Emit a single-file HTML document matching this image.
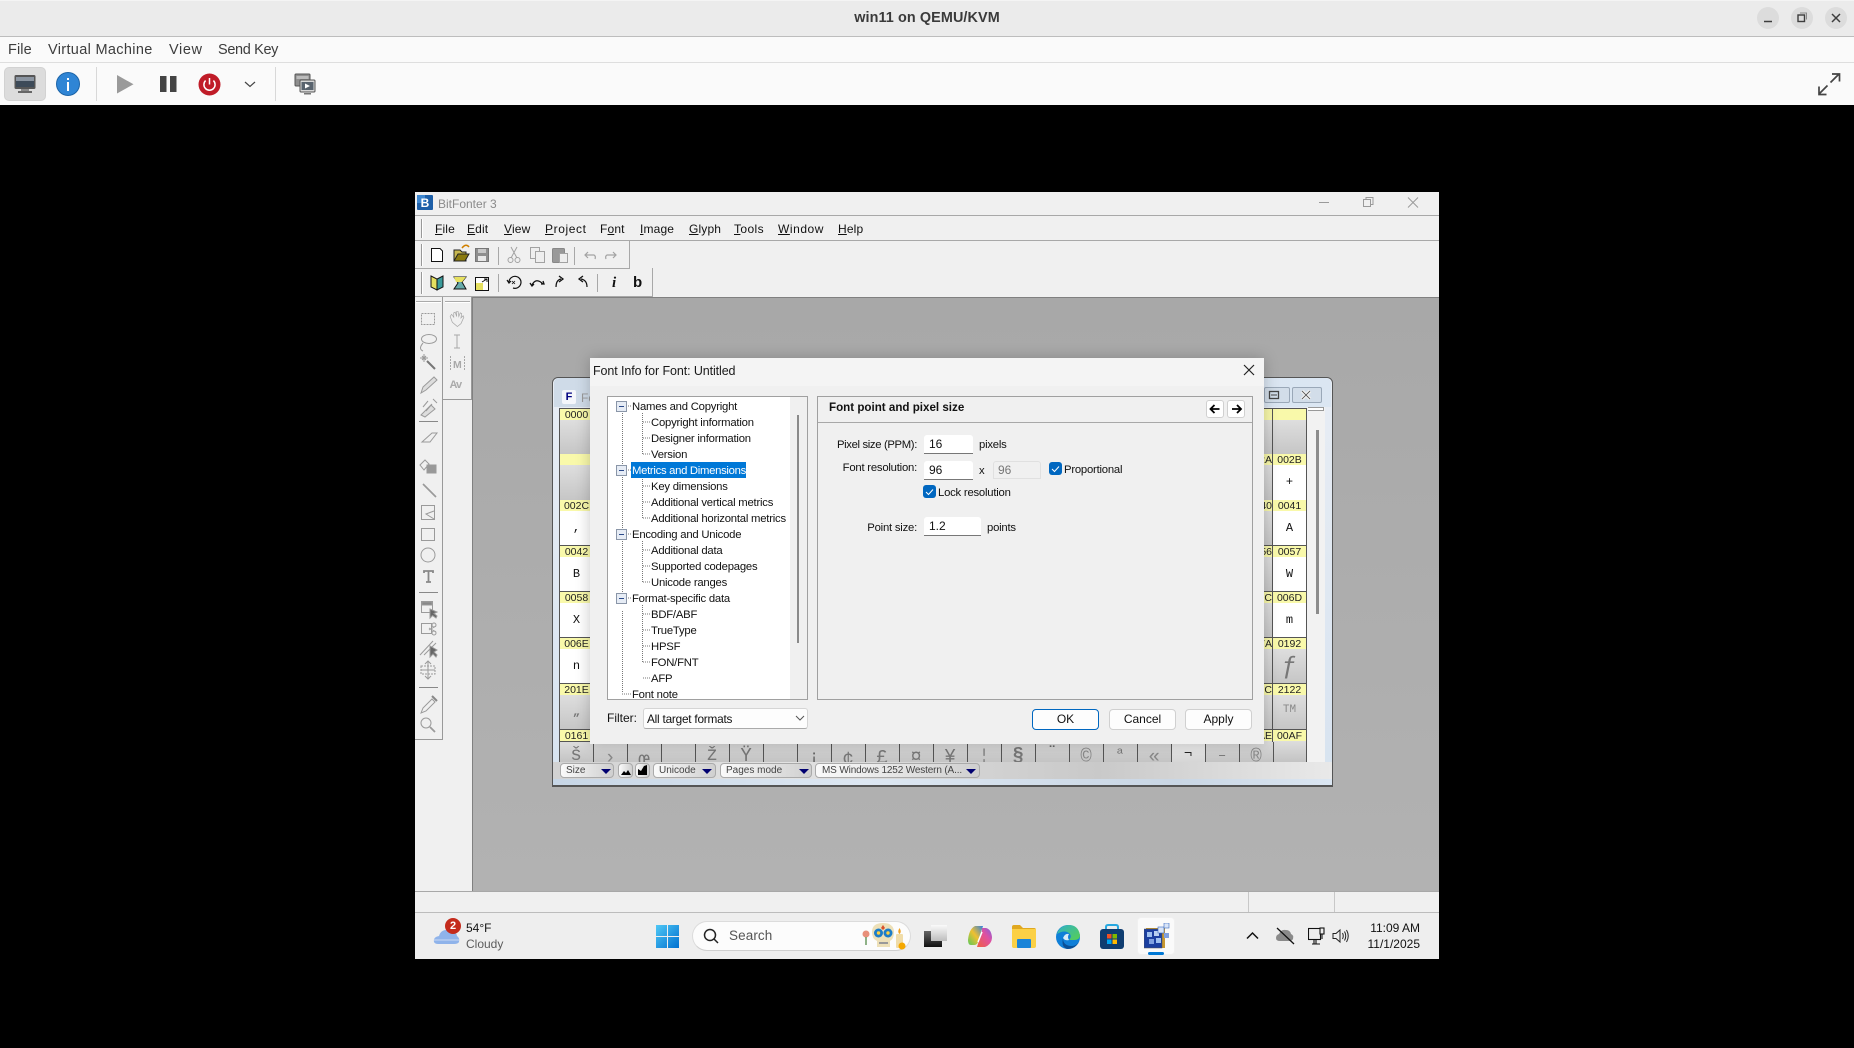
<!DOCTYPE html>
<html><head><meta charset="utf-8"><title>win11 on QEMU/KVM</title>
<style>
html,body{margin:0;padding:0;width:1854px;height:1048px;overflow:hidden;background:#000;font-family:"Liberation Sans","DejaVu Sans",sans-serif;}
div,span,svg{position:absolute;box-sizing:border-box}
.t{white-space:nowrap;font-size:11.3px;line-height:16px;color:#111;letter-spacing:-.22px}
.t span{position:static}
.m{font-size:12px;letter-spacing:.15px}
.n{font-size:12px;letter-spacing:0}
.u{text-decoration:underline}
.tm{font-size:14.5px;line-height:18px;color:#3d3d3d;white-space:nowrap;letter-spacing:.1px}
.r{text-align:right}
.h{width:35px;height:13px;background:#f9f9aa;border:1px solid #555;font-size:10.5px;line-height:12px;text-align:center;color:#222;letter-spacing:0}
.c{width:35px;height:34px;border-right:1px solid #555;border-left:1px solid #555;background:linear-gradient(#dedede,#c6c6c6);text-align:center;font-family:"Liberation Mono",monospace;color:#777;font-size:12px;line-height:34px}
.w{background:#fff;color:#111}
.inp{background:#fff;border-bottom:1px solid #777;border-radius:3px 3px 0 0;font-size:12px;line-height:19px;padding-left:5px;color:#111}
.cb{width:13px;height:13px;border-radius:3px;background:#0067c0}
.btn{background:#fdfdfd;border:1px solid #d0d0d0;border-radius:4px;font-size:12px;line-height:19px;text-align:center;color:#111;width:67px;height:21px}
.sb{background:linear-gradient(90deg,#fafafa,#cfcfcf);border:1px solid #aaa;border-radius:4px;height:15px;font-size:10px;line-height:13px;color:#444;padding-left:5px;white-space:nowrap}
.ar{width:0;height:0;border-left:5px solid transparent;border-right:5px solid transparent;border-top:5px solid #000070;top:5px}
.g{stroke:#a2a2a2;fill:none;stroke-width:1}
</style></head><body>

<!-- GNOME title bar -->
<div style="left:0;top:0;width:1854px;height:37px;background:#ebebeb;border-top:1px solid #f4f4f4;border-bottom:1px solid #bdbdbd"></div>
<div class="tm" style="left:0;top:9px;width:1854px;text-align:center;font-weight:bold;font-size:14.4px;color:#3a3a3a">win11 on QEMU/KVM</div>
<div style="left:1757px;top:7px;width:22px;height:22px;border-radius:50%;background:#dcdcdc"></div>
<div style="left:1791px;top:7px;width:22px;height:22px;border-radius:50%;background:#dcdcdc"></div>
<div style="left:1825px;top:7px;width:22px;height:22px;border-radius:50%;background:#dcdcdc"></div>
<svg style="left:1757px;top:7px" width="90" height="22" fill="none" stroke="#3d3d3d" stroke-width="1.3">
<path d="M7 14.5H15" stroke-width="1.5"/>
<rect x="41" y="8" width="6.5" height="6.5" stroke-width="1.4"/><path d="M43 6H49.5V12.5" stroke="#8a8a8a" stroke-width="1"/>
<path d="M75 7L83 15M83 7L75 15" stroke-width="1.5"/></svg>

<!-- VM menu -->
<div style="left:0;top:37px;width:1854px;height:26px;background:#fafafa;border-bottom:1px solid #dedede"></div>
<div class="tm" style="left:8px;top:41px">File</div>
<div class="tm" style="left:48px;top:41px;letter-spacing:.33px">Virtual Machine</div>
<div class="tm" style="left:169px;top:41px;letter-spacing:.6px">View</div>
<div class="tm" style="left:218px;top:41px;letter-spacing:-.35px">Send Key</div>

<!-- VM toolbar -->
<div style="left:0;top:63px;width:1854px;height:42px;background:#fafafa"></div>
<div style="left:4px;top:67px;width:42px;height:34px;background:#dcdcdc;border-radius:5px;border:1px solid #d2d2d2"></div>
<svg style="left:14px;top:74px" width="22" height="20"><rect x="0.5" y="1" width="21" height="14" rx="1.5" fill="#555"/><rect x="2" y="3" width="18" height="10" fill="#3d4a58"/><rect x="2" y="3" width="18" height="4" fill="#8a94a0"/><rect x="7" y="15" width="8" height="2" fill="#888"/><rect x="4" y="17" width="14" height="2" fill="#666"/></svg>
<svg style="left:56px;top:72px" width="24" height="24"><circle cx="12" cy="12" r="11.5" fill="#2f85d5"/><circle cx="12" cy="12" r="11.5" fill="none" stroke="#1c64a8"/><rect x="11" y="10" width="2" height="9" fill="#fff"/><rect x="11" y="6" width="2" height="2" fill="#fff"/></svg>
<div style="left:96px;top:67px;width:1px;height:34px;background:#d8d8d8"></div>
<svg style="left:117px;top:75px" width="18" height="19"><path d="M0 0L16.5 9.3L0 18.5Z" fill="#9a9a9a"/></svg>
<svg style="left:160px;top:76px" width="17" height="16"><rect width="6.5" height="16" fill="#444"/><rect x="10" width="6.5" height="16" fill="#444"/></svg>
<svg style="left:198px;top:73px" width="23" height="23"><circle cx="11.5" cy="11.5" r="11" fill="#c01c28"/><path d="M7.6 7.6A5.6 5.6 0 1 0 15.4 7.6" fill="none" stroke="#fff" stroke-width="1.5"/><path d="M11.5 5V11.5" stroke="#fff" stroke-width="1.5"/></svg>
<svg style="left:244px;top:81px" width="12" height="7"><path d="M1 1L6 5.5L11 1" fill="none" stroke="#444" stroke-width="1.2"/></svg>
<div style="left:275px;top:67px;width:1px;height:34px;background:#d8d8d8"></div>
<svg style="left:294px;top:73px" width="22" height="22"><rect x="1" y="1" width="15" height="12" rx="1" fill="#8e8e8e" stroke="#555"/><rect x="2.5" y="3" width="12" height="3" fill="#bbb"/><rect x="6" y="7" width="15" height="12" rx="1" fill="#d8d8d8" stroke="#555"/><rect x="7.5" y="9" width="12" height="8" fill="#59636e"/><path d="M11 10.5L16 13L11 15.5Z" fill="#fff"/><rect x="10" y="20" width="7" height="1.5" fill="#777"/></svg>
<svg style="left:1817px;top:72px" width="24" height="24" fill="none" stroke="#444" stroke-width="1.7"><path d="M13.5 10.5L22 2M15 2H22.5V9.5M10.5 13.5L2 22M2 14.5V22.5H9.5"/></svg>

<!-- Windows guest -->
<div style="left:415px;top:192px;width:1024px;height:767px;background:#f0f0f0"></div>
<svg style="left:417px;top:195px" width="16" height="15"><rect width="16" height="15" rx="1" fill="#1d5fa8"/><rect x="0" y="0" width="8" height="8" fill="#3d86cf"/><text x="8" y="12" font-family="Liberation Sans" font-weight="bold" font-size="12" fill="#fff" text-anchor="middle">B</text></svg>
<div class="t n" style="left:438px;top:196px;color:#8a8a8a">BitFonter 3</div>
<svg style="left:1315px;top:196px" width="110" height="14" fill="none" stroke="#9a9a9a"><path d="M4 6.5H14"/><rect x="48.5" y="3.5" width="7" height="7"/><path d="M51 3.5V1.5H58V8.5H55.5"/><path d="M93 1.5L103 11.500M103 1.500L93 11.500"/></svg>

<div style="left:415px;top:215px;width:1024px;height:1px;background:#a8a8a8"></div>
<div style="left:415px;top:240px;width:1024px;height:1px;background:#a8a8a8"></div>
<div style="left:421px;top:219px;width:2px;height:19px;border-left:1px solid #999;border-right:1px solid #fff"></div>
<div class="t m" style="left:435px;top:221px"><span class="u">F</span>ile</div>
<div class="t m" style="left:467px;top:221px"><span class="u">E</span>dit</div>
<div class="t m" style="left:504px;top:221px"><span class="u">V</span>iew</div>
<div class="t m" style="left:545px;top:221px;letter-spacing:.6px"><span class="u">P</span>roject</div>
<div class="t m" style="left:600px;top:221px">F<span class="u">o</span>nt</div>
<div class="t m" style="left:640px;top:221px"><span class="u">I</span>mage</div>
<div class="t m" style="left:689px;top:221px"><span class="u">G</span>lyph</div>
<div class="t m" style="left:734px;top:221px;letter-spacing:.4px"><span class="u">T</span>ools</div>
<div class="t m" style="left:778px;top:221px;letter-spacing:.55px"><span class="u">W</span>indow</div>
<div class="t m" style="left:838px;top:221px"><span class="u">H</span>elp</div>

<!-- toolbars -->
<div style="left:415px;top:240px;width:215px;height:29px;border-right:1px solid #a8a8a8;border-bottom:1px solid #a8a8a8"></div>
<div style="left:415px;top:268px;width:238px;height:29px;border-right:1px solid #a8a8a8;border-bottom:1px solid #a8a8a8"></div>
<div style="left:421px;top:244px;width:2px;height:22px;border-left:1px solid #999;border-right:1px solid #fff"></div>
<div style="left:421px;top:272px;width:2px;height:22px;border-left:1px solid #999;border-right:1px solid #fff"></div>
<svg style="left:414px;top:240px" width="240" height="56">
<path d="M17.500 8.500H26L28.500 11V21.500H17.500Z" fill="#fff" stroke="#111"/>
<path d="M40 21V10H46L48 12H52V21Z" fill="#c8b850" stroke="#222"/><path d="M40 21L44 14H55L51 21Z" fill="#8a7a10" stroke="#222"/><path d="M48 8Q52 3 55 7" fill="none" stroke="#d08000" stroke-width="1.500"/>
<rect x="61.500" y="8.500" width="13" height="13" fill="#8e8e8e" stroke="#777"/><rect x="64" y="9" width="8" height="4" fill="#c8c8c8"/><rect x="64" y="16" width="8" height="5" fill="#e8e8e8"/>
<rect x="84" y="7" width="1" height="18" fill="#a8a8a8"/>
<g class="g"><path d="M97 7L103 18M103 7L97 18"/><circle cx="96.500" cy="20" r="2.500"/><circle cx="103.500" cy="20" r="2.500"/>
<rect x="116.500" y="7.500" width="9" height="11" fill="#eee"/><rect x="121.500" y="11.500" width="9" height="11" fill="#eee"/>
<rect x="138.500" y="8.500" width="12" height="14" rx="1" fill="#999" stroke="#888"/><rect x="145.500" y="13.500" width="8" height="9" fill="#eee"/>
<path d="M174 12L171 15L174 18M172 15H180Q182 16 181 19" stroke-width="1.200"/>
<path d="M199 12L202 15L199 18M201 15H193Q191 16 192 19" stroke-width="1.200"/></g>
<rect x="160" y="7" width="1" height="18" fill="#a8a8a8"/>
</svg>
<svg style="left:414px;top:269px" width="240" height="28">
<path d="M17 7L23 10V21L17 18Z" fill="#e6e060" stroke="#111"/><path d="M29 7L23 10V21L29 18Z" fill="#3a9a9a" stroke="#111"/>
<path d="M40 8H52L48 13L52 20H40L44 14Z" fill="#6aa" stroke="#111"/><path d="M40 8H52L48 13H42Z" fill="#e6e060"/>
<rect x="61.500" y="8.500" width="13" height="13" fill="#fff" stroke="#111"/><rect x="62" y="14" width="7" height="7" fill="#e6e060"/><path d="M68 13L73 10M70 10H73V13" stroke="#111" fill="none"/>
<rect x="84" y="5" width="1" height="18" fill="#a8a8a8"/>
<g fill="none" stroke="#111" stroke-width="1.200"><path d="M95 13A6 6 0 1 1 99 19"/><path d="M93 11L95 14L97 12"/><path d="M98 12L101 15M101 12L98 15" stroke-width=".8"/>
<path d="M118 16Q122 8 129 15"/><path d="M116 14L118 17L120 15M127 15L130 15L129 12" stroke-width="1.300"/>
<path d="M142 18Q142 11 147 10"/><path d="M145 7L149 10L145 13" stroke-width="1.300"/>
<path d="M167 10Q173 11 173 18"/><path d="M169 7L165 10L169 13" stroke-width="1.300"/></g>
<rect x="183" y="5" width="1" height="18" fill="#a8a8a8"/>
</svg>
<div style="left:612px;top:275px;font:italic bold 15px 'Liberation Serif',serif;color:#111">i</div>
<div style="left:633px;top:274px;font:bold 15px 'Liberation Sans',sans-serif;color:#111">b</div>

<!-- MDI area -->
<div style="left:472px;top:297px;width:967px;height:594px;background:linear-gradient(#a8a8a8,#b2b2b2);border-top:1px solid #808080;border-left:1px solid #808080"></div>
<!-- left toolbars -->
<div style="left:415px;top:297px;width:28px;height:443px;border-right:1px solid #999;border-bottom:1px solid #999;background:#f0f0f0"></div>
<div style="left:443px;top:297px;width:29px;height:103px;border-right:1px solid #999;border-bottom:1px solid #999;background:#f0f0f0"></div>
<div style="left:416px;top:301px;width:25px;height:2px;border-top:1px solid #aaa;border-bottom:1px solid #fff"></div>
<div style="left:445px;top:301px;width:25px;height:2px;border-top:1px solid #aaa;border-bottom:1px solid #fff"></div>
<svg style="left:414px;top:297px" width="58" height="445" fill="none" stroke="#9a9a9a">
<rect x="7.500" y="16.500" width="13" height="11" stroke-dasharray="2 1"/>
<ellipse cx="15" cy="42" rx="7.500" ry="4.500"/><path d="M9 46Q4 52 9 54"/>
<path d="M8 59L12 63M12 59L8 63M10 57V65M6 61H14"/><path d="M13 64L21 72" stroke-width="2" stroke="#777"/>
<path d="M7 96L9 90L20 80L23 83L12 93Z" fill="#ddd"/>
<path d="M7 118L17 108L21 112L11 120Z" fill="#ddd"/><path d="M19 102L23 106"/><path d="M9 110L14 104M12 114L18 107" />
<rect x="5" y="124" width="19" height="1" fill="#888" stroke="none"/>
<path d="M8 145L18 136H23L16 145Z"/>
<path d="M6 168L11 163L15 167L10 173Z"/><rect x="13" y="168" width="9" height="8" fill="#999"/>
<path d="M9 187L22 200" stroke-width="1.700"/>
<rect x="7.500" y="208.500" width="13" height="14"/><path d="M20 214L12 217L20 222" />
<rect x="7.500" y="231.500" width="13" height="12"/>
<circle cx="14" cy="258" r="7"/>
<path d="M10 276V274H19V276M14.500 274V285M12 285H17" stroke-width="1.800" stroke="#888"/>
<rect x="5" y="295" width="19" height="1" fill="#888" stroke="none"/>
<rect x="7.500" y="304.500" width="11" height="11"/><rect x="8" y="305" width="10" height="3" fill="#888"/><path d="M16 312L16 321L18.500 318.500L22 321L23 319L20 316.500L23 315Z" fill="#666"/>
<rect x="7.500" y="326.500" width="10" height="10"/><circle cx="20" cy="328" r="2"/><circle cx="20" cy="336" r="2"/><path d="M15 331L22 335M15 333L22 329"/>
<path d="M6 358L19 344M10 358L22 346" /><path d="M16 349L16 360L19 357L22 360L23 358L20 355L23 353Z" fill="#666"/>
<path d="M14 364V382M7 373H21M11 367L14 364L17 367M11 379L14 382L17 379"/><path d="M7 369H21V377H7Z" stroke-dasharray="2 1"/>
<rect x="5" y="390" width="19" height="1" fill="#888" stroke="none"/>
<path d="M7 416L9 411L18 402L21 405L12 414Z"/><path d="M18 399L23 404" stroke-width="2" stroke="#888"/>
<circle cx="12" cy="426" r="5"/><path d="M16 430L21 435" stroke-width="1.800"/>
</svg>
<svg style="left:443px;top:297px" width="30" height="103" fill="none" stroke="#a8a8a8">
<path transform="translate(14 22) scale(.72) translate(-13.500 -20.500)" d="M7 25L4 17L6 14L9 18L9 12L11 11L13 17L13 10L15 10L16 17L18 12L20 13L19 19L22 16L23 18L19 27L14 31Z"/>
<path d="M11 38H17M11 51H17M14 38V51" stroke="#a8a8a8"/>
<path d="M7.500 59V73M21.500 59V73" stroke-dasharray="2 1"/>
</svg>
<div style="left:453px;top:359px;font:bold 10.500px 'Liberation Sans',sans-serif;color:#a8a8a8">M</div>
<div style="left:449.500px;top:379px;font:bold 11px 'Liberation Sans',sans-serif;color:#aaa;letter-spacing:-1px;width:16px">Av</div>

<!-- Font window -->
<div style="left:552px;top:377px;width:781px;height:410px;border:1px solid #555;border-bottom:2px solid #555;border-radius:6px 6px 0 0;background:linear-gradient(#e8edf4,#d7e3f0)"></div>
<div style="left:554px;top:378px;width:777px;height:29px;background:linear-gradient(90deg,#cfdbe8,#dbe6f2);border-radius:5px 5px 0 0"></div>
<div style="left:562px;top:390px;width:14px;height:14px;background:#f4f6fa;border-radius:2px;font:bold 11px/14px 'Liberation Sans',sans-serif;color:#000080;text-align:center">F</div>
<div class="t n" style="left:581px;top:390px;color:#999">Fo</div>
<div style="left:1264px;top:387px;width:26px;height:16px;border:1px solid #9aa8b8;border-radius:2px;background:#d2dde9"></div>
<div style="left:1292px;top:387px;width:30px;height:16px;border:1px solid #9aa8b8;border-radius:2px;background:#d2dde9"></div>
<svg style="left:1264px;top:387px" width="58" height="16" fill="none" stroke="#444"><rect x="5.500" y="4.500" width="9" height="7" stroke-width="1.300"/><path d="M7 8H13"/><path d="M38 4L46 12M46 4L38 12" stroke="#eee" stroke-width="3.500"/><path d="M38 4L46 12M46 4L38 12" stroke-width=".8"/></svg>

<div style="left:1307px;top:407px;width:18px;height:356px;background:#f2f2f2"></div>
<div style="left:1308px;top:407px;width:16px;height:4px;border:1px solid #999;border-width:1px 1px 1px 0;background:#fff"></div>
<div style="left:1316px;top:430px;width:3px;height:184px;background:#8c8c8c"></div>

<!-- col 0 -->
<div class="h" style="left:559px;top:408px">0000</div>
<div class="h" style="left:559px;top:453px"></div>
<div class="h" style="left:559px;top:499px">002C</div>
<div class="h" style="left:559px;top:545px">0042</div>
<div class="h" style="left:559px;top:591px">0058</div>
<div class="h" style="left:559px;top:637px">006E</div>
<div class="h" style="left:559px;top:683px">201E</div>
<div class="h" style="left:559px;top:729px">0161</div>
<div class="c" style="left:559px;top:420px"></div>
<div class="c" style="left:559px;top:465px;height:35px"></div>
<div class="c w" style="left:559px;top:511px">,</div>
<div class="c w" style="left:559px;top:557px">B</div>
<div class="c w" style="left:559px;top:603px">X</div>
<div class="c w" style="left:559px;top:649px">n</div>
<div class="c" style="left:559px;top:695px;font-weight:bold">„</div>
<!-- col 20/21 -->
<div class="h" style="left:1238px;top:408px"></div><div class="h" style="left:1272px;top:408px"></div>
<div class="h" style="left:1238px;top:453px;text-align:right">002A</div><div class="h" style="left:1272px;top:453px">002B</div>
<div class="h" style="left:1238px;top:499px;text-align:right">0040</div><div class="h" style="left:1272px;top:499px">0041</div>
<div class="h" style="left:1238px;top:545px;text-align:right">0056</div><div class="h" style="left:1272px;top:545px">0057</div>
<div class="h" style="left:1238px;top:591px;text-align:right">006C</div><div class="h" style="left:1272px;top:591px">006D</div>
<div class="h" style="left:1238px;top:637px;text-align:right">017A</div><div class="h" style="left:1272px;top:637px">0192</div>
<div class="h" style="left:1238px;top:683px;text-align:right">211C</div><div class="h" style="left:1272px;top:683px">2122</div>
<div class="h" style="left:1238px;top:729px;text-align:right">00AE</div><div class="h" style="left:1272px;top:729px">00AF</div>
<div class="c" style="left:1238px;top:420px"></div><div class="c" style="left:1272px;top:420px"></div>
<div class="c" style="left:1238px;top:465px;height:35px"></div><div class="c w" style="left:1272px;top:465px;height:35px">+</div>
<div class="c" style="left:1238px;top:511px"></div><div class="c w" style="left:1272px;top:511px">A</div>
<div class="c" style="left:1238px;top:557px"></div><div class="c w" style="left:1272px;top:557px">W</div>
<div class="c" style="left:1238px;top:603px"></div><div class="c w" style="left:1272px;top:603px">m</div>
<div class="c" style="left:1238px;top:649px"></div><div class="c" style="left:1272px;top:649px;font-size:26px;color:#777">ƒ</div>
<div class="c" style="left:1238px;top:695px"></div><div class="c" style="left:1272px;top:695px;color:#888;font-size:11px;line-height:30px">TM</div>
<div class="c" style="left:1238px;top:741px;height:21px"></div><div class="c" style="left:1272px;top:741px;height:21px"></div>

<!-- bottom glyph row -->
<div style="left:559px;top:742px;width:748px;height:21px;overflow:hidden">
<div style="left:0;top:0;width:748px;height:21px;background:linear-gradient(#dcdcdc,#c2c2c2)"></div>
<div style="left:612px;top:0;width:34px;height:21px;background:linear-gradient(#efefef,#d4d4d4)"></div>
<svg style="left:0;top:0" width="748" height="21"><path d="M.5 0V21M34.500 0V21M68.500 0V21M102.500 0V21M136.500 0V21M170.500 0V21M204.500 0V21M238.500 0V21M272.500 0V21M306.500 0V21M340.500 0V21M374.500 0V21M408.500 0V21M442.500 0V21M476.500 0V21M510.500 0V21M544.500 0V21M578.500 0V21M612.500 0V21M646.500 0V21M680.500 0V21M714.500 0V21M747.500 0V21" stroke="#555"/></svg>
<div class="t" style="left:0;top:3px;width:34px;text-align:center;font:19px/20px 'Liberation Mono',monospace;color:#777">š</div>
<div class="t" style="left:34px;top:6px;width:34px;text-align:center;font:19px/20px 'Liberation Mono',monospace;color:#888">›</div>
<div class="t" style="left:68px;top:8px;width:34px;text-align:center;font:19px/20px 'Liberation Mono',monospace;color:#777">œ</div>
<div class="t" style="left:136px;top:3px;width:34px;text-align:center;font:19px/20px 'Liberation Mono',monospace;color:#777">ž</div>
<div class="t" style="left:170px;top:4px;width:34px;text-align:center;font:19px/20px 'Liberation Mono',monospace;color:#777">Ÿ</div>
<div class="t" style="left:238px;top:6px;width:34px;text-align:center;font:19px/20px 'Liberation Mono',monospace;color:#666">¡</div>
<div class="t" style="left:272px;top:8px;width:34px;text-align:center;font:19px/20px 'Liberation Mono',monospace;color:#777">¢</div>
<div class="t" style="left:306px;top:6px;width:34px;text-align:center;font:19px/20px 'Liberation Mono',monospace;color:#777">£</div>
<div class="t" style="left:340px;top:5px;width:34px;text-align:center;font:19px/20px 'Liberation Mono',monospace;color:#777">¤</div>
<div class="t" style="left:374px;top:5px;width:34px;text-align:center;font:19px/20px 'Liberation Mono',monospace;color:#777">¥</div>
<div class="t" style="left:408px;top:5px;width:34px;text-align:center;font:19px/20px 'Liberation Mono',monospace;color:#888">¦</div>
<div class="t" style="left:442px;top:4px;width:34px;text-align:center;font:bold 19px/20px 'Liberation Mono',monospace;color:#777">§</div>
<div class="t" style="left:476px;top:3px;width:34px;text-align:center;font:bold 15px/16px 'Liberation Mono',monospace;color:#666">¨</div>
<div class="t" style="left:510px;top:5px;width:34px;text-align:center;font:19px/20px 'Liberation Mono',monospace;color:#888">©</div>
<div class="t" style="left:544px;top:5px;width:34px;text-align:center;font:14px/16px 'Liberation Mono',monospace;color:#777">ª</div>
<div class="t" style="left:578px;top:5px;width:34px;text-align:center;font:19px/20px 'Liberation Mono',monospace;color:#888">«</div>
<div class="t" style="left:612px;top:4px;width:34px;text-align:center;font:14px/16px 'Liberation Mono',monospace;color:#222">¬</div>
<div class="t" style="left:646px;top:6px;width:34px;text-align:center;font:14px/16px 'Liberation Mono',monospace;color:#777">–</div>
<div class="t" style="left:680px;top:5px;width:34px;text-align:center;font:19px/20px 'Liberation Mono',monospace;color:#888">®</div>
</div>

<!-- bottom status of font window -->
<div style="left:553px;top:762px;width:779px;height:18px;background:linear-gradient(90deg,#d2d2d2,#e2e2e2 30%,#c9c9c9 70%,#e9e9e9)"></div>
<div style="left:553px;top:779px;width:779px;height:6px;background:linear-gradient(90deg,#c7d6e6,#dde7f2 40%,#c9d6e4 80%,#dbe6f2)"></div>
<div class="sb" style="left:560px;top:763px;width:54px">Size<div class="ar" style="left:40px"></div></div>
<div class="sb" style="left:618px;top:763px;width:15px"></div>
<div class="sb" style="left:635px;top:763px;width:15px"></div>
<svg style="left:618px;top:763px" width="32" height="15"><path d="M3 12L6 8L8 10L10 7L13 12Z" fill="#000"/><path d="M20 12V6L23 8L26 3L29 2V12Z" fill="#000"/></svg>
<div class="sb" style="left:653px;top:763px;width:63px">Unicode<div class="ar" style="left:48px"></div></div>
<div class="sb" style="left:720px;top:763px;width:92px">Pages mode<div class="ar" style="left:78px"></div></div>
<div class="sb" style="left:815px;top:763px;width:165px;padding-left:6px;letter-spacing:-.15px">MS Windows 1252 Western (A...<div class="ar" style="left:150px"></div></div>

<!-- Dialog -->
<div style="left:590px;top:358px;width:674px;height:386px;background:#f0f0f0;box-shadow:0 0 14px rgba(0,0,0,.22)"></div>
<div style="left:590px;top:358px;width:674px;height:28px;background:#f4f4f4"></div>
<div class="t" style="left:593px;top:363px;font-size:12.500px;letter-spacing:-.1px;color:#1a1a1a">Font Info for Font: Untitled</div>
<svg style="left:1243px;top:364px" width="12" height="12"><path d="M1 1L11 11M11 1L1 11" stroke="#222" stroke-width="1.200"/></svg>

<!-- tree -->
<div style="left:607px;top:396px;width:201px;height:304px;background:#fff;border:1px solid #a0a0a0"></div>
<div style="left:790px;top:397px;width:17px;height:302px;background:#f0f0f0"></div>
<div style="left:797px;top:415px;width:2px;height:228px;background:#8a8a8a"></div>
<svg style="left:607px;top:397px" width="70" height="302" fill="none" stroke="#777" stroke-dasharray="1 1">
<path d="M15.500 14V198M15.500 214V296"/>
<path d="M21 9H25M21 73H25M21 137H25M21 201H25M15 297H25"/>
<path d="M35.500 16V57M35.500 80V121M35.500 144V185M35.500 208V265"/>
<path d="M36 25H44M36 41H44M36 57H44M36 89H44M36 105H44M36 121H44M36 153H44M36 169H44M36 185H44M36 217H44M36 233H44M36 249H44M36 265H44M36 281H44" />
</svg>
<svg style="left:616px;top:400px" width="11" height="210">
<g fill="#e6ecf5" stroke="#8a96a8"><rect x=".5" y="1.500" width="10" height="10"/><rect x=".5" y="65.500" width="10" height="10"/><rect x=".5" y="129.500" width="10" height="10"/><rect x=".5" y="193.500" width="10" height="10"/></g>
<g stroke="#2b4a8a"><path d="M3 6.500H8M3 70.500H8M3 134.500H8M3 198.500H8"/></g></svg>
<div style="left:631px;top:462px;width:115px;height:16px;background:#0078d7"></div>
<div style="left:607px;top:397px;width:183px;height:302px;overflow:hidden">
<div class="t" style="left:25px;top:2px">Names and Copyright</div>
<div class="t" style="left:44px;top:18px">Copyright information</div>
<div class="t" style="left:44px;top:34px">Designer information</div>
<div class="t" style="left:44px;top:50px">Version</div>
<div class="t" style="left:25px;top:66px;color:#fff;letter-spacing:-.3px">Metrics and Dimensions</div>
<div class="t" style="left:44px;top:82px">Key dimensions</div>
<div class="t" style="left:44px;top:98px">Additional vertical metrics</div>
<div class="t" style="left:44px;top:114px">Additional horizontal metrics</div>
<div class="t" style="left:25px;top:130px">Encoding and Unicode</div>
<div class="t" style="left:44px;top:146px">Additional data</div>
<div class="t" style="left:44px;top:162px">Supported codepages</div>
<div class="t" style="left:44px;top:178px">Unicode ranges</div>
<div class="t" style="left:25px;top:194px">Format-specific data</div>
<div class="t" style="left:44px;top:210px">BDF/ABF</div>
<div class="t" style="left:44px;top:226px">TrueType</div>
<div class="t" style="left:44px;top:242px">HPSF</div>
<div class="t" style="left:44px;top:258px">FON/FNT</div>
<div class="t" style="left:44px;top:274px">AFP</div>
<div class="t" style="left:25px;top:290px">Font note</div>
</div>

<!-- filter -->
<div class="t n" style="left:607px;top:710px">Filter:</div>
<div style="left:643px;top:708px;width:165px;height:21px;background:#fdfdfd;border:1px solid #d5d5d5;border-bottom-color:#aaa;border-radius:3px"></div>
<div class="t" style="left:647px;top:711px;font-size:11.800px">All target formats</div>
<svg style="left:795px;top:715px" width="10" height="7"><path d="M1 1L5 5L9 1" fill="none" stroke="#555"/></svg>

<!-- right panel -->
<div style="left:817px;top:396px;width:436px;height:304px;border:1px solid #a0a0a0"></div>
<div style="left:818px;top:422px;width:434px;height:1px;background:#a8a8a8"></div>
<div class="t" style="left:829px;font-weight:bold;font-size:11.600px;letter-spacing:0;top:400px">Font point and pixel size</div>
<div style="left:1206px;top:400px;width:18px;height:18px;background:#fff;border:1px solid #d0d0d0;border-radius:3px"></div>
<div style="left:1227px;top:400px;width:18px;height:18px;background:#fff;border:1px solid #d0d0d0;border-radius:3px"></div>
<svg style="left:1206px;top:400px" width="40" height="18" fill="none" stroke="#000" stroke-width="1.800"><path d="M13.500 9H5M8.500 5L4.500 9L8.500 13M26 9H34.500M31 5L35 9L31 13"/></svg>

<div class="t r" style="left:800px;top:437px;width:117px;letter-spacing:-.35px">Pixel size (PPM):</div>
<div class="inp" style="left:924px;top:435px;width:49px;height:19px">16</div>
<div class="t" style="left:979px;top:437px">pixels</div>
<div class="t r" style="left:800px;top:460px;width:117px">Font resolution:</div>
<div class="inp" style="left:924px;top:461px;width:49px;height:19px">96</div>
<div class="t" style="left:979px;top:463px">x</div>
<div class="inp" style="left:993px;top:461px;width:48px;height:18px;background:#f0f0f0;border:1px solid #e0e0e0;color:#777;line-height:17px;padding-left:4px">96</div>
<div class="cb" style="left:1049px;top:462px"></div>
<div class="t" style="left:1064px;top:462px">Proportional</div>
<div class="cb" style="left:923px;top:485px"></div>
<svg style="left:923px;top:462px" width="140" height="36" fill="none" stroke="#fff"><path d="M129 7L131.500 9.500L136 4.500"/><path d="M3 30L5.500 32.500L10 27.500"/></svg>
<div class="t" style="left:938px;top:485px">Lock resolution</div>
<div class="t r" style="left:800px;top:520px;width:117px">Point size:</div>
<div class="inp" style="left:924px;top:517px;width:57px;height:19px">1.2</div>
<div class="t" style="left:987px;top:520px">points</div>

<div class="btn" style="left:1032px;top:709px;border-color:#0067c0;border-width:1.500px">OK</div>
<div class="btn" style="left:1109px;top:709px">Cancel</div>
<div class="btn" style="left:1185px;top:709px">Apply</div>

<!-- App status bar -->
<div style="left:415px;top:891px;width:1024px;height:22px;background:#f0f0f0;border-top:1px solid #a8a8a8;border-bottom:1px solid #bcbcbc"></div>
<div style="left:1248px;top:892px;width:1px;height:20px;background:#c8c8c8"></div>
<div style="left:1334px;top:892px;width:1px;height:20px;background:#c8c8c8"></div>

<!-- Taskbar -->
<div style="left:415px;top:913px;width:1024px;height:46px;background:#eeeeee"></div>
<svg style="left:432px;top:918px" width="30" height="28"><path d="M2 24Q1 19 7 18Q9 11 17 12Q24 12 25 18Q28 20 27 24Q26 26 22 26H6Q3 26 2 24Z" fill="#8fb3ea"/><path d="M2 22H27" stroke="#c8d8f4" stroke-width="1"/></svg>
<div style="left:445px;top:918px;width:16px;height:16px;border-radius:50%;background:#c42b1c;color:#fff;font-size:11px;line-height:16px;text-align:center;font-weight:bold">2</div>
<div class="t n" style="left:466px;top:920px;color:#111">54°F</div>
<div class="t n" style="left:466px;top:936px;color:#5c5c5c">Cloudy</div>

<svg style="left:656px;top:925px" width="23" height="23"><defs><linearGradient id="wg" x1="0" y1="0" x2="1" y2="1"><stop offset="0" stop-color="#4fc8f5"/><stop offset="1" stop-color="#0070d0"/></linearGradient></defs><path d="M0 0H11V11H0ZM12 0H23V11H12ZM0 12H11V23H0ZM12 12H23V23H12Z" fill="url(#wg)"/></svg>

<div style="left:692px;top:921px;width:219px;height:30px;background:#fcfcfc;border:1px solid #dcdcdc;border-bottom-color:#cfcfcf;border-radius:15px"></div>
<svg style="left:703px;top:928px" width="16" height="16" fill="none" stroke="#222" stroke-width="1.500"><circle cx="7" cy="7" r="5.500"/><path d="M11 11L15 15"/></svg>
<div class="t" style="left:729px;top:928px;font-size:13.500px;color:#555;letter-spacing:.1px">Search</div>
<svg style="left:859px;top:922px" width="48" height="30">
<circle cx="7" cy="12" r="3.500" fill="#e8907a"/><path d="M7 15V23" stroke="#6a9a60" stroke-width="1.500"/>
<path d="M13 10Q13 1 24 1Q35 1 35 10Q35 17 31 19V25H18V19Q13 17 13 10Z" fill="#ede0b8"/>
<circle cx="19.500" cy="11" r="4.500" fill="#1e7dc8"/><circle cx="29" cy="11" r="4.500" fill="#1e7dc8"/><circle cx="19.500" cy="11" r="1.700" fill="#ffd040"/><circle cx="29" cy="11" r="1.700" fill="#ffd040"/><path d="M24 3L26 6L24 8L22 6Z" fill="#d8502a"/><rect x="20" y="20" width="9" height="2" fill="#999"/>
<rect x="37" y="12" width="7" height="14" rx="1" fill="#f0dca8"/><path d="M40.500 6Q43 10 40.500 12Q38 10 40.500 6" fill="#f0a020"/><circle cx="43" cy="24" r="3.500" fill="#f5a800"/></svg>

<!-- task view -->
<svg style="left:924px;top:925px" width="24" height="23"><defs><linearGradient id="tv" x1="0" y1="0" x2="0" y2="1"><stop offset="0" stop-color="#666"/><stop offset="1" stop-color="#111"/></linearGradient><linearGradient id="tv2" x1="0" y1="0" x2="0" y2="1"><stop offset="0" stop-color="#fafafa"/><stop offset="1" stop-color="#bdbdbd"/></linearGradient></defs><rect x="0" y="6" width="18" height="16" fill="url(#tv)"/><rect x="7" y="0" width="16" height="16" fill="url(#tv2)"/></svg>
<!-- copilot -->
<svg style="left:968px;top:925px" width="24" height="23"><defs><linearGradient id="c1" x1="0" y1="1" x2="1" y2="0"><stop offset="0" stop-color="#5ac85a"/><stop offset=".5" stop-color="#f0c030"/><stop offset="1" stop-color="#3080e0"/></linearGradient><linearGradient id="c2" x1="0" y1="1" x2="1" y2="0"><stop offset="0" stop-color="#f06040"/><stop offset=".6" stop-color="#e050a0"/><stop offset="1" stop-color="#8060e0"/></linearGradient></defs><path d="M7 1H15L10 17Q9 20 6 20H3Q0 20 0 15Q1 4 7 1Z" fill="url(#c1)"/><path d="M14 3H18Q23 4 24 12Q24 19 17 22H9L14 6Z" fill="url(#c2)"/><path d="M14 7L10 17" stroke="#fff" stroke-width="1.500"/></svg>
<!-- folder -->
<svg style="left:1012px;top:925px" width="24" height="23"><path d="M0 2Q0 0 2 0H8L11 3H22Q24 3 24 5V8H0Z" fill="#e0a820"/><path d="M0 4H24V21Q24 23 22 23H2Q0 23 0 21Z" fill="#fbd045"/><rect x="5" y="14" width="14" height="9" rx="1" fill="#1a84d8"/></svg>
<!-- edge -->
<svg style="left:1056px;top:925px" width="24" height="24"><defs><linearGradient id="e1" x1="0" y1="0" x2="1" y2="1"><stop offset="0" stop-color="#2fb0c8"/><stop offset="1" stop-color="#58d050"/></linearGradient></defs><circle cx="12" cy="12" r="12" fill="#0f7fd8"/><path d="M1 9Q4 0 13 0Q22 0 24 10Q24 15 18 15H13Q16 12 14 9Q9 4 1 9Z" fill="url(#e1)"/><path d="M7 13Q7 21 16 21Q20 21 23 17Q19 24 11 24Q5 22 7 13Z" fill="#0a4f96"/><path d="M7 13Q9 8 13 9Q11 12 13 15Q9 16 7 13Z" fill="#d8ecf8"/></svg>
<!-- store -->
<svg style="left:1100px;top:924px" width="24" height="25"><path d="M6 7V3Q6 1 8 1H16Q18 1 18 3V7" fill="none" stroke="#28a8e0" stroke-width="2"/><rect y="5" width="24" height="20" rx="3" fill="#0f3d70"/><rect x="7" y="10" width="4.500" height="4.500" fill="#f25022"/><rect x="12.500" y="10" width="4.500" height="4.500" fill="#7fba00"/><rect x="7" y="15.500" width="4.500" height="4.500" fill="#00a4ef"/><rect x="12.500" y="15.500" width="4.500" height="4.500" fill="#ffb900"/></svg>
<!-- active app -->
<div style="left:1137px;top:917px;width:38px;height:38px;background:#fafafa;border-radius:4px;border:1px solid #f0f0f0"></div>
<div style="left:1148px;top:952px;width:16px;height:3px;border-radius:2px;background:#0078d4"></div>
<svg style="left:1144px;top:923px" width="26" height="26"><rect x="2" y="5" width="19" height="20" fill="#c89830"/><rect x="0" y="6" width="18" height="19" fill="#1b3fa0" stroke="#555" stroke-width=".5"/><rect x="3" y="9" width="5" height="5" fill="#9fc0f0"/><rect x="10" y="8" width="5" height="5" fill="#b8d0f0"/><rect x="5" y="16" width="5" height="5" fill="#7fa0e0"/><rect x="12" y="15" width="5" height="5" fill="#9fc0f0"/><rect x="14" y="4" width="6" height="6" fill="#d8e4f8" stroke="#3b6bc0" stroke-width=".6"/><rect x="20" y="0" width="5" height="5" fill="#d8e4f8" stroke="#3b6bc0" stroke-width=".6"/><rect x="20" y="10" width="5" height="5" fill="#7fa0e0"/></svg>

<!-- tray -->
<svg style="left:1246px;top:931px" width="13" height="9"><path d="M1 7.500L6.500 2L12 7.500" fill="none" stroke="#111" stroke-width="1.500"/></svg>
<svg style="left:1275px;top:927px" width="20" height="18"><path d="M1 11Q1 8 4 7Q6 2 11 3Q15 3 16 7Q19 8 18 12Q17 14 14 14H5Q1 14 1 11Z" fill="#8a8a8a"/><path d="M2 1L19 17" stroke="#111" stroke-width="1.300"/></svg>
<svg style="left:1308px;top:927px" width="18" height="20" fill="none" stroke="#111" stroke-width="1.100"><rect x=".5" y="1.500" width="12" height="11"/><path d="M4 17H12M8 13V17M6 13V17"/><rect x="12" y="1" width="4" height="6" fill="#eee"/><path d="M14 7V12"/></svg>
<svg style="left:1332px;top:928px" width="18" height="16" fill="none" stroke="#222" stroke-width="1"><path d="M1 5.500H4L8 2V14L4 10.500H1Z"/><path d="M10.500 5Q12 8 10.500 11M12.500 3.500Q15 8 12.500 12.500M14.500 2Q18 8 14.500 14"/></svg>
<div class="t r n" style="left:1340px;top:920px;width:80px;color:#111">11:09 AM</div>
<div class="t r n" style="left:1340px;top:936px;width:80px;color:#111">11/1/2025</div>

</body></html>
